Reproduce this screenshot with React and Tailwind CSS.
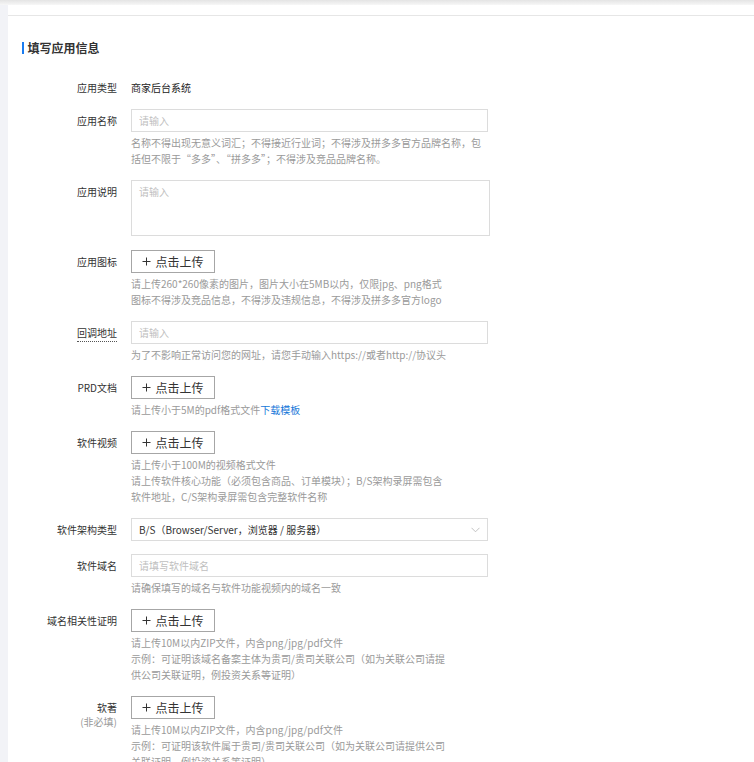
import React from 'react';

const inputCls =
  'block w-[357px] h-[23px] border border-[#dcdcdc] px-[7px] text-[10px] text-[#333] outline-none placeholder:text-[#c0c0c0] bg-white';

function PlusIcon() {
  return (
    <svg width="9" height="9" viewBox="0 0 9 9" className="shrink-0">
      <path d="M4.5 0.5v8M0.5 4.5h8" stroke="#333" strokeWidth="1" fill="none" />
    </svg>
  );
}

function UploadButton() {
  return (
    <button className="w-[84px] h-[23px] border border-[#a6a6a6] bg-white flex items-center justify-center gap-[4px] text-[12px] text-[#333] leading-none">
      <PlusIcon />
      <span>点击上传</span>
    </button>
  );
}

function Help({ lines }) {
  return (
    <div className="mt-[3px] text-[10px] leading-[16px] text-[#9a9a9a] whitespace-nowrap">
      {lines.map((l, i) => (
        <div key={i}>{l}</div>
      ))}
    </div>
  );
}

function FormItem({ label, sub, dotted, help, mb = 'mb-[13px]', children }) {
  return (
    <div className={`flex ${mb}`}>
      <div className="w-[109px] shrink-0 flex flex-col items-end text-[10px] text-[#333]">
        <span className={dotted ? 'border-b border-dotted border-[#555] leading-[17px] mt-[3px]' : 'leading-[23px]'}>
          {label}
        </span>
        {sub && <span className="-mt-[4px] leading-[14px] text-[#999]">{sub}</span>}
      </div>
      <div className="ml-[14px] text-[10px] leading-[16px]">
        {children}
        {help && <Help lines={help} />}
      </div>
    </div>
  );
}

export default function App() {
  return (
    <div className="w-[754px] h-[762px] overflow-hidden bg-[#f2f3f7] font-['Noto_Sans_CJK_SC',sans-serif]">
      <div className="h-[5px] bg-gradient-to-b from-[#e4e4e4] to-[#f7f7f7]" />
      <div className="flex h-full">
        <div className="w-[8px] shrink-0" />
        <div className="flex-1 bg-white">
          <div className="h-[11px] border-b border-[#e6e6e6]" />

          <div className="mt-[22px] ml-[14px] flex items-center h-[20px]">
            <div className="w-[1.5px] h-[12px] bg-[#1a7cf0]" />
            <span className="ml-[4px] text-[12px] font-semibold text-[#333]">填写应用信息</span>
          </div>

          <div className="mt-[18px] flex mb-[10px]">
            <div className="w-[109px] shrink-0 text-right text-[10px] leading-[23px] text-[#333]">应用类型</div>
            <div className="ml-[14px] text-[10px] leading-[23px] text-[#222]">商家后台系统</div>
          </div>

          <FormItem
            label="应用名称"
            help={[
              '名称不得出现无意义词汇；不得接近行业词；不得涉及拼多多官方品牌名称，包',
              '括但不限于“多多”、“拼多多”；不得涉及竞品品牌名称。',
            ]}
          >
            <input className={inputCls} placeholder="请输入" />
          </FormItem>

          <FormItem label="应用说明" mb="mb-[14px]">
            <textarea
              className="block w-[359px] h-[56px] border border-[#dcdcdc] px-[7px] py-[4px] text-[10px] leading-[14px] text-[#333] outline-none resize-none placeholder:text-[#c0c0c0]"
              placeholder="请输入"
            />
          </FormItem>

          <FormItem
            label="应用图标"
            help={[
              '请上传260*260像素的图片，图片大小在5MB以内，仅限jpg、png格式',
              '图标不得涉及竞品信息，不得涉及违规信息，不得涉及拼多多官方logo',
            ]}
          >
            <UploadButton />
          </FormItem>

          <FormItem
            label="回调地址"
            dotted
            help={['为了不影响正常访问您的网址，请您手动输入https://或者http://协议头']}
          >
            <input className={inputCls} placeholder="请输入" />
          </FormItem>

          <FormItem
            label="PRD文档"
            help={[
              <>
                请上传小于5M的pdf格式文件<span className="text-[#1677d9]">下载模板</span>
              </>,
            ]}
          >
            <UploadButton />
          </FormItem>

          <FormItem
            label="软件视频"
            help={[
              '请上传小于100M的视频格式文件',
              '请上传软件核心功能（必须包含商品、订单模块）；B/S架构录屏需包含',
              '软件地址，C/S架构录屏需包含完整软件名称',
            ]}
          >
            <UploadButton />
          </FormItem>

          <FormItem label="软件架构类型">
            <div className="w-[357px] h-[23px] border border-[#dcdcdc] px-[7px] flex items-center justify-between text-[10px] text-[#333]">
              <span>B/S（Browser/Server，浏览器 / 服务器）</span>
              <svg width="9" height="6" viewBox="0 0 9 6">
                <path d="M0.5 0.8l4 4 4-4" stroke="#bbb" strokeWidth="0.9" fill="none" />
              </svg>
            </div>
          </FormItem>

          <FormItem label="软件域名" help={['请确保填写的域名与软件功能视频内的域名一致']}>
            <input className={inputCls} placeholder="请填写软件域名" />
          </FormItem>

          <FormItem
            label="域名相关性证明"
            help={[
              '请上传10M以内ZIP文件，内含png/jpg/pdf文件',
              '示例：可证明该域名备案主体为贵司/贵司关联公司（如为关联公司请提',
              '供公司关联证明，例投资关系等证明）',
            ]}
          >
            <UploadButton />
          </FormItem>

          <FormItem
            label="软著"
            sub="(非必填)"
            help={[
              '请上传10M以内ZIP文件，内含png/jpg/pdf文件',
              '示例：可证明该软件属于贵司/贵司关联公司（如为关联公司请提供公司',
              '关联证明，例投资关系等证明）',
            ]}
          >
            <UploadButton />
          </FormItem>
        </div>
      </div>
    </div>
  );
}
